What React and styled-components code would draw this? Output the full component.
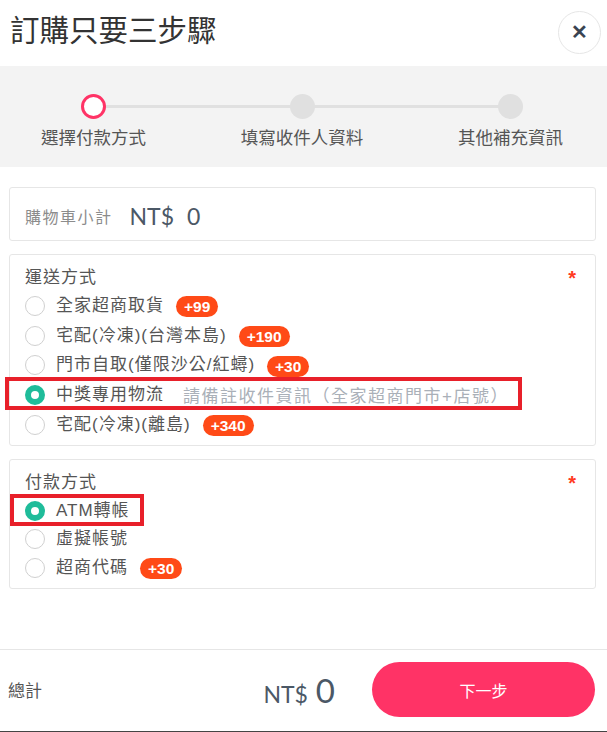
import React from 'react'
import styled, { createGlobalStyle } from 'styled-components'

const Global = createGlobalStyle`
	html, body {
		margin: 0;
		padding: 0;
		background: #fff;
	}
	body {
		font-family: "Liberation Sans", "Noto Sans CJK TC", sans-serif;
		color: #555;
	}
	* {
		box-sizing: border-box;
	}
`

const Page = styled.div`
	height: 732px;
	display: flex;
	flex-direction: column;
	border-bottom: 1px solid #444;
`

const Header = styled.div`
	height: 66px;
	display: flex;
	align-items: center;
	justify-content: space-between;
	padding: 0 6px 4px 10px;
	h1 {
		margin: 0;
		font-size: 29.5px;
		font-weight: 400;
		color: #333;
		line-height: 1;
	}
`

const CloseButton = styled.button`
	width: 43px;
	height: 43px;
	border-radius: 50%;
	border: 1px solid #e6e6e6;
	background: #fff;
	color: #3a4452;
	font-size: 20px;
	font-weight: 700;
	display: flex;
	align-items: center;
	justify-content: center;
	padding: 0;
	margin-top: 2px;
`

const Steps = styled.div`
	height: 101px;
	background: #f3f3f3;
	display: flex;
	justify-content: space-between;
	padding: 28px 44px 0 41px;
	position: relative;
	&::before {
		content: '';
		position: absolute;
		left: 93px;
		right: 97px;
		top: 39px;
		height: 3px;
		background: #e0e0e0;
	}
`

const Step = styled.div`
	display: flex;
	flex-direction: column;
	align-items: center;
	gap: 8px;
	position: relative;
	span {
		font-size: 17.5px;
		color: #555;
		line-height: 22px;
		white-space: nowrap;
	}
`

const Dot = styled.div`
	width: 25px;
	height: 25px;
	border-radius: 50%;
	background: ${p => (p.$active ? '#fff' : '#e0e0e0')};
	border: ${p => (p.$active ? '3.5px solid #ff3366' : 'none')};
`

const Body = styled.div`
	flex: 1;
	padding: 20px 11px 0 9px;
	display: flex;
	flex-direction: column;
	gap: 13px;
`

const Card = styled.div`
	border: 1px solid #e6e6e6;
	border-radius: 3px;
	padding: 12px 15px 6px 15px;
	position: relative;
`

const Subtotal = styled(Card)`
	height: 54px;
	display: flex;
	align-items: center;
	padding: 4px 15px 0 15px;
	.label {
		font-size: 16px;
		letter-spacing: 1.5px;
		color: #8c8c8c;
	}
`

const Amount = styled.span`
	font-family: Lato, "Liberation Sans", sans-serif;
	font-weight: 400;
	font-size: ${p => p.$size || 23}px;
	color: #4b5866;
	margin-left: ${p => p.$gap || 0}px;
`

const CardTitle = styled.div`
	font-size: 17px;
	letter-spacing: 1px;
	line-height: 22px;
	color: #555;
	margin-bottom: 2px;
`

const Required = styled.span`
	position: absolute;
	right: 19px;
	top: 12px;
	color: #ff3b1f;
	font-size: 20px;
	font-weight: 700;
`

const Options = styled.div`
	display: flex;
	flex-direction: column;
`

const Row = styled.label`
	height: ${p => p.$h || 29.7}px;
	display: flex;
	align-items: center;
	position: relative;
	width: max-content;
	${p =>
		p.$mark &&
		`&::after {
			content: '';
			position: absolute;
			left: ${p.$mark[0]}px;
			right: ${p.$mark[1]}px;
			top: ${p.$mark[2]}px;
			bottom: ${p.$mark[3]}px;
			border: 4px solid #e8202a;
		}`}
`

const Radio = styled.span`
	width: 20px;
	height: 20px;
	border-radius: 50%;
	flex-shrink: 0;
	border: ${p => (p.$checked ? '6px solid #1fbc9a' : '1px solid #d0d0d0')};
	background: #fff;
	margin: 0 11px 0 0;
`

const Label = styled.span`
	font-size: 17px;
	letter-spacing: 1px;
	color: #555;
	line-height: 20px;
	white-space: nowrap;
`

const Note = styled.span`
	font-size: 17px;
	color: #aab0b8;
	margin-left: 19px;
	white-space: nowrap;
	letter-spacing: 1.5px;
`

const Badge = styled.span`
	margin-left: 12px;
	background: #ff4a17;
	color: #fff;
	font-family: "Liberation Sans", sans-serif;
	font-weight: 700;
	font-size: 15.5px;
	height: 21px;
	line-height: 21px;
	padding: 0 8px;
	border-radius: 11px;
	margin-top: 2px;
`

const Footer = styled.div`
	height: 82px;
	border-top: 1px solid #e6e6e6;
	display: flex;
	align-items: center;
	padding: 0 12px 2px 8px;
	.label {
		font-size: 17px;
		color: #555;
		flex: 1;
	}
`

const Total = styled.div`
	display: flex;
	align-items: baseline;
	margin-right: 37px;
`

const NextButton = styled.button`
	width: 223px;
	height: 55px;
	border-radius: 28px;
	border: none;
	background: #ff3366;
	color: #fff;
	font-family: "Liberation Sans", "Noto Sans CJK TC", sans-serif;
	font-size: 16px;
`

const shipping = [
	{ label: '全家超商取貨', fee: '+99' },
	{ label: '宅配(冷凍)(台灣本島)', fee: '+190' },
	{ label: '門市自取(僅限沙公/紅蟳)', fee: '+30' },
	{ label: '中獎專用物流', note: '請備註收件資訊（全家超商門市+店號）', checked: true, mark: [-20, -13, -3, 0] },
	{ label: '宅配(冷凍)(離島)', fee: '+340' },
]

const payment = [
	{ label: 'ATM轉帳', checked: true, mark: [-15, -14, -2, -1] },
	{ label: '虛擬帳號' },
	{ label: '超商代碼', fee: '+30' },
]

function OptionList({ items, h }) {
	return (
		<Options>
			{items.map(it => (
				<Row key={it.label} $mark={it.mark} $h={h}>
					<Radio $checked={it.checked} />
					<Label>{it.label}</Label>
					{it.note && <Note>{it.note}</Note>}
					{it.fee && <Badge>{it.fee}</Badge>}
				</Row>
			))}
		</Options>
	)
}

export default function App() {
	return (
		<Page>
			<Global />
			<Header>
				<h1>訂購只要三步驟</h1>
				<CloseButton>✕</CloseButton>
			</Header>
			<Steps>
				<Step>
					<Dot $active />
					<span>選擇付款方式</span>
				</Step>
				<Step>
					<Dot />
					<span>填寫收件人資料</span>
				</Step>
				<Step>
					<Dot />
					<span>其他補充資訊</span>
				</Step>
			</Steps>
			<Body>
				<Subtotal>
					<span className="label">購物車小計</span>
					<Amount $gap={17}>NT$</Amount>
					<Amount $gap={13}>0</Amount>
				</Subtotal>
				<Card>
					<CardTitle>運送方式</CardTitle>
					<Required>*</Required>
					<OptionList items={shipping} />
				</Card>
				<Card>
					<CardTitle>付款方式</CardTitle>
					<Required>*</Required>
					<OptionList items={payment} h={28.5} />
				</Card>
			</Body>
			<Footer>
				<span className="label">總計</span>
				<Total>
					<Amount $size={23}>NT$</Amount>
					<Amount $size={33} $gap={8}>0</Amount>
				</Total>
				<NextButton>下一步</NextButton>
			</Footer>
		</Page>
	)
}
